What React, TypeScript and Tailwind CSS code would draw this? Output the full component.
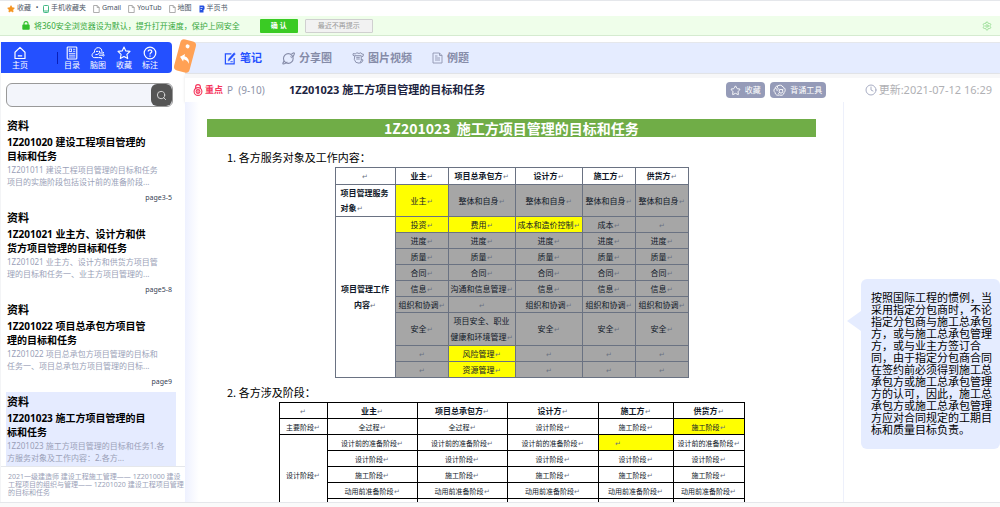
import type { ReactNode } from 'react';
import { Clock, Search, Settings, Star } from 'lucide-react';

const bookmarks = [
    { name: '手机收藏夹', icon: <PhoneIcon /> },
    { name: 'Gmail', icon: <PageIcon /> },
    { name: 'YouTub', icon: <PageIcon /> },
    { name: '地图', icon: <PageIcon /> },
    { name: '半页书', icon: <BookIcon /> },
];

const chapters = [
    {
        title: ['1Z201020 建设工程项目管理的', '目标和任务'],
        text: ['1Z201011 建设工程项目管理的目标和任务', '项目的实施阶段包括设计前的准备阶段...'],
        page: 'page3-5',
    },
    {
        title: ['1Z201021 业主方、设计方和供', '货方项目管理的目标和任务'],
        text: ['1Z201021 业主方、设计方和供货方项目管', '理的目标和任务一、业主方项目管理的...'],
        page: 'page5-8',
    },
    {
        title: ['1Z201022 项目总承包方项目管', '理的目标和任务'],
        text: ['1Z201022 项目总承包方项目管理的目标和', '任务一、项目总承包方项目管理的目标...'],
        page: 'page9',
    },
    {
        title: ['1Z201023 施工方项目管理的目', '标和任务'],
        text: ['1Z201023 施工方项目管理的目标和任务1.各', '方服务对象及工作内容：2.各方...'],
        page: '',
        active: true,
    },
];

const parties = ['业主', '项目总承包方', '设计方', '施工方', '供货方'];

// "*" in front of a cell marks it yellow
const workRows = [
    ['*投资', '*费用', '*成本和造价控制', '成本', ''],
    ['进度', '进度', '进度', '进度', '进度'],
    ['质量', '质量', '质量', '质量', '质量'],
    ['合同', '合同', '合同', '合同', '合同'],
    ['信息', '沟通和信息管理', '信息', '信息', '信息'],
    ['组织和协调', '', '组织和协调', '组织和协调', '组织和协调'],
    ['安全', '项目安全、职业\n健康和环境管理', '安全', '安全', '安全'],
    ['', '*风险管理', '', '', ''],
    ['', '*资源管理', '', '', ''],
];

const stageRows = [
    ['设计前的准备阶段', '设计前的准备阶段', '设计前的准备阶段', '*', '设计前的准备阶段'],
    ['设计阶段', '设计阶段', '设计阶段', '设计阶段', '设计阶段'],
    ['施工阶段', '施工阶段', '施工阶段', '施工阶段', '施工阶段'],
    ['动用前准备阶段', '动用前准备阶段', '动用前准备阶段', '动用前准备阶段', '动用前准备阶段'],
];

const note = [
    '按照国际工程的惯例，当',
    '采用指定分包商时，不论',
    '指定分包商与施工总承包',
    '方，或与施工总承包管理',
    '方，或与业主方签订合',
    '同，由于指定分包商合同',
    '在签约前必须得到施工总',
    '承包方或施工总承包管理',
    '方的认可，因此，施工总',
    '承包方或施工总承包管理',
    '方应对合同规定的工期目',
    '标和质量目标负责。',
];

function PhoneIcon() {
    return (
        <svg viewBox="0 0 6 8" className="w-1.5 h-2" fill="none" stroke="#42b983">
            <rect x="0.5" y="0.5" width="5" height="7" rx="0.8" />
            <path d="M1 6h4" />
        </svg>
    );
}

function PageIcon() {
    return (
        <svg viewBox="0 0 7 8" className="w-[7px] h-2" fill="none" stroke="#999" strokeWidth="0.8">
            <path d="M0.6 0.5h3.6l2 2v5H0.6zM4.2 0.5v2h2" />
        </svg>
    );
}

function BookIcon() {
    return (
        <svg viewBox="0 0 6 8" className="w-1.5 h-2">
            <path d="M0.5 0.5h4l1 1v2.8l-1 .7v2.5h-4z" fill="#2450e0" />
            <path d="M1.5 2.5h2.2M1.5 4.5h1.5" stroke="#fff" strokeWidth="0.7" />
        </svg>
    );
}

function LockIcon() {
    return (
        <svg viewBox="0 0 8 9" className="w-2 h-[9px]">
            <rect x="0.3" y="3.6" width="7.4" height="5.2" rx="0.8" fill="#32c02c" />
            <path d="M2 4V2.6a2 2 0 0 1 4 0V4" fill="none" stroke="#32c02c" strokeWidth="1.1" />
        </svg>
    );
}

function HomeIcon() {
    return (
        <svg viewBox="0 0 14 14" className="w-3.5 h-3.5" fill="none" stroke="#fff" strokeWidth="1.2">
            <path d="M2 6.2 7 1.4l5 4.8v6.3H2zM4.8 9.8h4.4" strokeLinejoin="round" />
        </svg>
    );
}

function CatalogIcon() {
    return (
        <svg viewBox="0 0 14 14" className="w-3.5 h-3.5" fill="none" stroke="#fff">
            <rect x="2.2" y="1" width="9.6" height="12" rx="0.8" strokeWidth="1.1" />
            <rect x="4.2" y="3" width="2.4" height="2.4" strokeWidth="0.8" />
            <path d="M8 3.3h2.3M8 5.3h2.3M4 7.4h6.3M4 9.2h6.3M4 11h6.3" strokeWidth="0.8" />
        </svg>
    );
}

function MindMapIcon() {
    return (
        <svg viewBox="0 0 14 14" className="w-3.5 h-3.5" fill="none" stroke="#fff" strokeWidth="1">
            <path d="M3.4 6.4C3.2 3.4 5.2 1.5 7.4 1.6c2.4.1 3.8 2 3.2 4M3.4 6.4C.4 7 .2 11.400 3.200 11.600h4.600" />
            <path d="M4.400 8.600c3 .2 4.400-1 4.200-3.800M5 5.400h2.400M8.800 7h4l-1.200-1.400M8 9.200h3.600M8 11.600h2.400v1.400" />
            <circle cx="12.400" cy="9.200" r="0.800" />
        </svg>
    );
}

function StarIcon() {
    return (
        <svg viewBox="0 0 14 14" className="w-3.5 h-3.5" fill="none" stroke="#fff" strokeWidth="1.1" strokeLinejoin="round">
            <path d="m7 1 1.8 3.9 4.2.5-3.1 2.9.8 4.3L7 10.5l-3.7 2.1.8-4.3L1 5.400l4.200-.5z" />
        </svg>
    );
}

function HelpIcon() {
    return (
        <svg viewBox="0 0 14 14" className="w-3.5 h-3.5" fill="none" stroke="#fff" strokeWidth="1.2">
            <circle cx="7" cy="7" r="5.8" />
            <path d="M5.2 5.6c0-2.4 3.7-2.2 3.6-.1C8.8 6.8 7 6.9 7 8.4M7 9.6v1.2" />
        </svg>
    );
}

function NoteIcon() {
    return (
        <svg viewBox="0 0 13 14" className="w-3 h-[13px]" fill="none" stroke="#2450ff" strokeWidth="1.3">
            <path d="M8 2H1.500v10.800h9.500V6.500" />
            <path d="m4.500 9.800.6-2.400 5.800-6.600 1.400 1.200-5.800 6.600z" fill="#2450ff" strokeWidth="0.500" />
            <path d="M7 10.500h2.500" strokeWidth="1" />
        </svg>
    );
}

function PlanetIcon() {
    return (
        <svg viewBox="0 0 14 14" className="w-[13px] h-[13px]" fill="none" stroke="#858ba8" strokeWidth="1.2">
            <circle cx="6.800" cy="7" r="5.200" />
            <path d="M10.200 2.400C11.600 1 13 .6 13.300 1.400c.4 1-.8 2.600-1.800 4M2.400 9.800C1 11.400.6 12.600 1.200 12.900c1 .4 3-1 4.600-2.300" />
            <path d="M9 4.200c.8.6 1.200 1.400 1.200 2.400" strokeWidth="0.900" />
        </svg>
    );
}

function MediaIcon() {
    return (
        <svg viewBox="0 0 13 13" className="w-3 h-3" fill="none" stroke="#858ba8" strokeWidth="1" strokeLinejoin="round">
            <path d="M3 4.500 1 3.400l.4-1.800 2.400.6L5 .800l2.600.8 2-.8 1 1.400 1.800.2-.4 2.200-1.400.6" />
            <path d="M3 4h7v5.500l-2 2.700-3.800-1L2.500 8z" />
            <path d="M4.600 5.800h3.800M4.600 7.600h3.800M10 8l2 .600-1.400 2.600-2 .8" />
        </svg>
    );
}

function ExampleIcon() {
    return (
        <svg viewBox="0 0 11 12" className="w-[11px] h-3" fill="none" stroke="#8f95b0" strokeWidth="0.900">
            <path d="M1 1h6.500L10 3.500V11H1zM7.500 1v2.500H10" />
            <path d="M3 4h2.500M3 6h5M3 8h5" />
        </svg>
    );
}

function KeyLockIcon() {
    return (
        <svg viewBox="0 0 10 12" className="w-2.5 h-3 shrink-0" fill="none" stroke="#f5365c" strokeWidth="1.1">
            <circle cx="5" cy="7.5" r="3.9" />
            <path d="M2.600 4.400V3a2.400 2.400 0 0 1 4.800 0v1.400" />
            <circle cx="5" cy="7.500" r="1.900" />
            <path d="M5 6.200v3" />
        </svg>
    );
}

function ToolIcon() {
    return (
        <svg viewBox="0 0 14 14" className="w-[13px] h-[13px] shrink-0" fill="none" stroke="#fff" strokeWidth="1">
            <path d="M4.800 2.200C6.800.6 10 1.200 10.800 3.400c2.600.6 3 4.200 1.200 5.800-.2 2.600-3 3.600-5 2.600-2.400 1-4.800-.4-4.800-2.600C.4 8 .8 5.200 2.400 4.600c0-1.200 1-2.400 2.400-2.400z" />
            <path d="M4.800 2.200c-.4 2 .4 3.200 2.400 3.600M2.400 4.600c1.600 0 2.400 1.400 2 3" />
            <circle cx="8.600" cy="7.800" r="2" />
            <path d="M10 6.400l1.400-1.400M7 9.200l-1.400 1.200" />
        </svg>
    );
}

function ReplyIcon() {
    return (
        <svg viewBox="0 0 12 10" className="w-[11px] h-[9px]" fill="#fff">
            <path d="M5 0v2.600c4 .2 6.400 2.600 6.600 7C10 7.200 8 6.200 5 6.200v2.600L.3 4.400z" />
        </svg>
    );
}

const Mark = () => <span className="text-[7px] text-gray-500 font-normal">↵</span>;

const Lines = ({ items }: { items: string[] }) => (
    <>
        {items.map((line) => (
            <span key={line} className="block whitespace-nowrap">{line}</span>
        ))}
    </>
);

const MenuItem = ({ label, children }: { label: string; children: ReactNode }) => (
    <button className="w-[26px] flex flex-col items-center text-[8px] leading-[9px] text-white">
        {children}
        {label}
    </button>
);

const Tab = ({ label, active, children }: { label: string; active?: boolean; children: ReactNode }) => (
    <button className={`flex items-center gap-1 text-[11px] font-bold ${active ? 'text-[#2450ff]' : 'text-[#858ba8]'}`}>
        {children}
        {label}
    </button>
);

const TopBars = () => (
    <header className="shrink-0">
        <nav className="h-4 border-t border-gray-200 flex items-center pl-[7px] text-[7px] text-gray-600">
            <a href="#" className="flex items-center gap-0.5">
                <Star size={8} fill="#f5941f" stroke="#f5941f" />
                收藏
            </a>
            <span className="w-3 text-center">•</span>
            <div className="flex gap-[7px]">
                {bookmarks.map((b) => (
                    <a key={b.name} href="#" className="flex items-center gap-0.5 whitespace-nowrap">
                        {b.icon}
                        {b.name}
                    </a>
                ))}
            </div>
        </nav>
        <div className="h-5 bg-[#effeea] border-b border-[#d5ebd0] flex items-center pl-[22px] pr-2 text-[8px] text-[#35a83c]">
            <LockIcon />
            <p className="ml-1">将360安全浏览器设为默认，提升打开速度，保护上网安全</p>
            <button className="ml-5 w-[38px] h-3.5 rounded-[1px] bg-[#3acb24] text-white text-[7px] leading-3 font-bold">确 认</button>
            <button className="ml-[7px] w-[68px] h-3.5 rounded-[1px] bg-[#f2f2f2] border border-[#d0d0d0] text-[#999] text-[7px] leading-3">
                最近不再提示
            </button>
            <button aria-label="设置" className="ml-auto">
                <Settings size={10} stroke="#8fda8c" />
            </button>
        </div>
    </header>
);

const Sidebar = () => (
    <aside className="w-[185px] shrink-0 flex flex-col border-l border-gray-100 relative">
        <nav className="mr-[13px] h-[31px] rounded-r bg-[#2450ff] flex items-center pl-1.5">
            <MenuItem label="主页"><HomeIcon /></MenuItem>
            <span className="ml-6 mr-px w-px h-3 bg-[#0a1fb8]" />
            <MenuItem label="目录"><CatalogIcon /></MenuItem>
            <MenuItem label="脑图"><MindMapIcon /></MenuItem>
            <MenuItem label="收藏"><StarIcon /></MenuItem>
            <MenuItem label="标注"><HelpIcon /></MenuItem>
        </nav>
        <button
            aria-label="返回"
            className="absolute z-10 left-[176px] -top-0.5 w-4 h-8 rounded bg-[#ffa155] rotate-[15deg] flex flex-col items-center gap-1.5 pt-1"
        >
            <span className="w-1 h-1 rounded-full bg-white" />
            <ReplyIcon />
        </button>
        <form className="mt-2.5 ml-[5px] mr-3 h-6 rounded-md border border-[#999] bg-[#f3f5fb] flex overflow-hidden shrink-0">
            <input aria-label="搜索" className="flex-1 min-w-0 px-2 text-[9px] outline-none" />
            <button type="button" aria-label="搜索资料" className="w-[21px] rounded-md bg-[#555] flex items-center justify-center">
                <Search size={11} stroke="#ddd" />
            </button>
        </form>
        <div className="flex-1 min-h-0 overflow-hidden mt-[9px] pl-[5px] pr-[9px]">
            {chapters.map((c) => (
                <article key={c.title[0]} className={`pt-px pb-1 pl-px ${c.active ? 'bg-[#e5ebff]' : ''}`}>
                    <h3 className="text-[11px] leading-[18px] font-bold text-black">资料</h3>
                    <h2 className="text-[10px] leading-[14px] font-bold text-black"><Lines items={c.title} /></h2>
                    <p className="mt-px text-[8px] leading-3 text-[#9a9fb8]"><Lines items={c.text} /></p>
                    {c.page && <p className="mt-1 pr-1 text-[7px] leading-3 text-right text-gray-700">{c.page}</p>}
                </article>
            ))}
        </div>
        <p className="h-9 shrink-0 border-t border-gray-200 pt-1.5 pl-[7px] text-[7px] leading-2 text-[#9a9fb8]">
            <Lines items={['2021一级建造师 建设工程施工管理—— 1Z201000 建设', '工程项目的组织与管理—— 1Z201020 建设工程项目管理', '的目标和任务']} />
        </p>
    </aside>
);

const ServiceTable = () => (
    <table className="mx-auto w-[354px] table-fixed border-collapse text-[8px] leading-[14px] text-center text-gray-900 whitespace-nowrap">
        <colgroup>
            <col className="w-[60px]" />
            <col className="w-[53px]" />
            <col className="w-[67px]" />
            <col className="w-[67px]" />
            <col className="w-[53px]" />
            <col />
        </colgroup>
        <thead>
            <tr className="h-[17px]">
                <th className="border border-gray-500"><Mark /></th>
                {parties.map((p) => (
                    <th key={p} className="border border-gray-500">{p}<Mark /></th>
                ))}
            </tr>
        </thead>
        <tbody>
            <tr className="h-8">
                <th className="border border-gray-500 text-left pl-[5px] leading-[15px]">项目管理服务<br />对象<Mark /></th>
                <td className="border border-gray-500 bg-[#ffff00]">业主<Mark /></td>
                {parties.slice(1).map((p) => (
                    <td key={p} className="border border-gray-500 bg-[#a6a6a6]">整体和自身<Mark /></td>
                ))}
            </tr>
            {workRows.map((row, i) => (
                <tr key={i} className="h-4">
                    {i === 0 && (
                        <th rowSpan={9} className="border border-gray-500 leading-4">项目管理工作<br />内容<Mark /></th>
                    )}
                    {row.map((cell, j) => (
                        <td
                            key={j}
                            className={`border border-gray-500 whitespace-pre ${cell.startsWith('*') ? 'bg-[#ffff00]' : 'bg-[#a6a6a6]'} ${cell.includes('\n') ? 'leading-4' : ''}`}
                        >
                            {cell.replace('*', '')}<Mark />
                        </td>
                    ))}
                </tr>
            ))}
        </tbody>
    </table>
);

const StageTable = () => (
    <table className="mx-auto w-[466px] table-fixed border-collapse text-[7px] leading-[14px] text-center text-gray-900 whitespace-nowrap">
        <colgroup>
            <col className="w-12" />
            <col className="w-[90px]" />
            <col className="w-[90px]" />
            <col className="w-[91px]" />
            <col className="w-[75px]" />
            <col />
        </colgroup>
        <thead>
            <tr className="h-4 text-[8px]">
                <th className="border border-black"><Mark /></th>
                {parties.map((p) => (
                    <th key={p} className="border border-black">{p}<Mark /></th>
                ))}
            </tr>
        </thead>
        <tbody>
            <tr className="h-4">
                <td className="border border-black">主要阶段<Mark /></td>
                <td className="border border-black">全过程<Mark /></td>
                <td className="border border-black">全过程<Mark /></td>
                <td className="border border-black">设计阶段<Mark /></td>
                <td className="border border-black">施工阶段<Mark /></td>
                <td className="border border-black bg-[#ffff00]">施工阶段<Mark /></td>
            </tr>
            {stageRows.map((row, i) => (
                <tr key={i} className="h-4">
                    {i === 0 && <td rowSpan={5} className="border border-black">设计阶段<Mark /></td>}
                    {row.map((cell, j) => (
                        <td key={j} className={`border border-black ${cell === '*' ? 'bg-[#ffff00] text-left pl-4' : ''}`}>
                            {cell.replace('*', '')}<Mark />
                        </td>
                    ))}
                </tr>
            ))}
            <tr className="h-4">
                {parties.map((p) => (
                    <td key={p} className="border border-black" />
                ))}
            </tr>
        </tbody>
    </table>
);

const App = () => {
    return (
        <div className="h-screen flex flex-col overflow-hidden bg-white font-['Noto_Sans','Noto_Sans_CJK_SC',sans-serif]">
            <TopBars />
            <div className="flex-1 min-h-0 flex pt-1.5">
                <Sidebar />
                <main className="flex-1 min-w-0 flex flex-col">
                    <nav className="h-8 shrink-0 bg-[#e5ecff] border-y border-gray-200 flex items-center gap-5 pl-[39px]">
                        <Tab label="笔记" active><NoteIcon /></Tab>
                        <Tab label="分享圈"><PlanetIcon /></Tab>
                        <Tab label="图片视频"><MediaIcon /></Tab>
                        <Tab label="例题"><ExampleIcon /></Tab>
                    </nav>
                    <div className="h-7 shrink-0 border-t-4 border-[#f7f7f8] shadow-sm flex items-center px-2">
                        <div className="w-24 shrink-0 flex items-center text-[10px] text-[#8d92a8] whitespace-nowrap">
                            <KeyLockIcon />
                            <span className="ml-0.5 mr-1 text-[9px] font-bold text-[#f5365c]">重点</span>
                            P&nbsp; (9-10)
                        </div>
                        <h1 className="text-[11px] font-bold text-[#1c2340]">1Z201023 施工方项目管理的目标和任务</h1>
                        <button className="ml-auto h-4 w-[39px] rounded bg-[#959bb8] text-white text-[8px] flex items-center justify-center gap-1">
                            <Star size={11} />
                            收藏
                        </button>
                        <button className="ml-[5px] h-4 w-14 rounded bg-[#959bb8] text-white text-[8px] flex items-center justify-center gap-1">
                            <ToolIcon />
                            背诵工具
                        </button>
                        <time className="ml-[39px] flex items-center gap-0.5 text-[11px] text-[#b0b0b4]">
                            <Clock size={12} stroke="#a9aec4" />
                            更新:2021-07-12 16:29
                        </time>
                    </div>
                    <div className="flex-1 min-h-0 flex overflow-hidden bg-linear-to-r from-[#eef1ff] to-white to-[14px]">
                        <section className="flex-1 min-w-0 pl-[22px] pr-[27px] pt-[17px] font-['Noto_Sans_CJK_SC',sans-serif]">
                            <h2 className="h-[18px] bg-[#70ad47] text-white text-[14px] leading-[18px] font-bold text-center">
                                1Z201023&nbsp; 施工方项目管理的目标和任务
                            </h2>
                            <h3 className="mt-3 mb-0.5 pl-5 text-[11px] leading-4 text-black">1. 各方服务对象及工作内容：</h3>
                            <ServiceTable />
                            <h3 className="mt-1.5 mb-0.5 pl-5 text-[11px] leading-4 text-black">2. 各方涉及阶段：</h3>
                            <StageTable />
                        </section>
                        <aside className="w-[157px] shrink-0 border-l border-[#edf0fb] pt-[177px] pl-[17px]">
                            <div className="relative rounded-md bg-[#e5ecff] pt-3 pb-3.5 pl-2.5 text-[11px] leading-3 text-black font-['Noto_Sans_CJK_SC',sans-serif]">
                                <svg viewBox="0 0 14 20" className="absolute -left-3.5 top-8 w-3.5 h-5" fill="#e5ecff">
                                    <path d="M14 0v20L0 10z" />
                                </svg>
                                <Lines items={note} />
                            </div>
                        </aside>
                    </div>
                </main>
            </div>
            <footer className="h-[5px] shrink-0 border-t border-gray-200 bg-[#fafafa]" />
        </div>
    );
};

export default App;
